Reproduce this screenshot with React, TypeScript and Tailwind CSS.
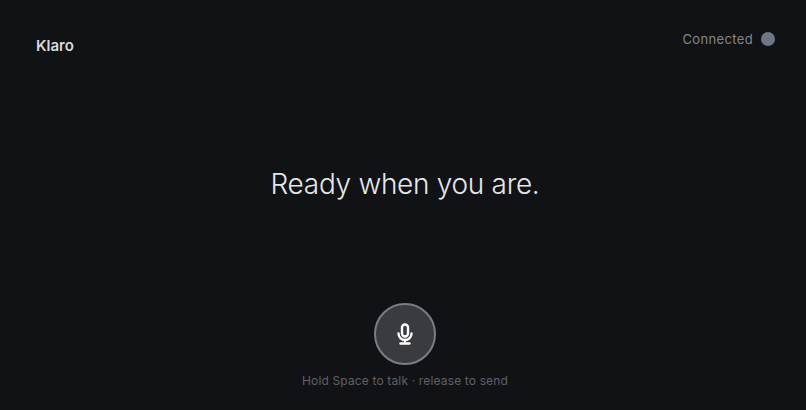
export default function App() {
  return (
    <div className="flex h-[410px] w-[806px] flex-col overflow-hidden bg-[#111216] font-['Inter',sans-serif]">
      <header className="flex h-[78px] shrink-0 justify-between pl-9 pr-[31px]">
        <span className="mt-[36px] text-[15px] leading-[20px] font-semibold text-[#d9dade]">Klaro</span>
        <div className="mt-[31px] flex h-[16px] items-center gap-[8px]">
          <span className="mt-[2px] text-[13px] tracking-[0.35px] text-[#85868a]">Connected</span>
          <span className="h-[14px] w-[14px] rounded-full bg-[#6f7685]" />
        </div>
      </header>
      <main className="flex flex-1 flex-col items-center pl-1">
        <h1 className="mt-[86px] text-[28px] leading-[40px] font-light tracking-[-0.3px] text-[#e6e7ea]">Ready when you are.</h1>
        <button className="mt-[99px] flex h-[62px] w-[62px] items-center justify-center rounded-full border-2 border-[#7c7d82] bg-[#3a3b40] text-white">
          <svg width="24" height="24" viewBox="0 0 24 24" fill="none" stroke="currentColor" strokeWidth="2.4" strokeLinecap="round" strokeLinejoin="round">
            <rect x="9" y="2.5" width="6" height="12" rx="3" />
            <path d="M5.5 11.5a6.5 6.5 0 0 0 13 0" />
            <path d="M12 18v3" />
            <path d="M7.5 21.5h9" />
          </svg>
        </button>
        <p className="mt-[7px] text-[12px] tracking-[0.15px] text-[#606165]">Hold Space to talk · release to send</p>
      </main>
    </div>
  );
}
